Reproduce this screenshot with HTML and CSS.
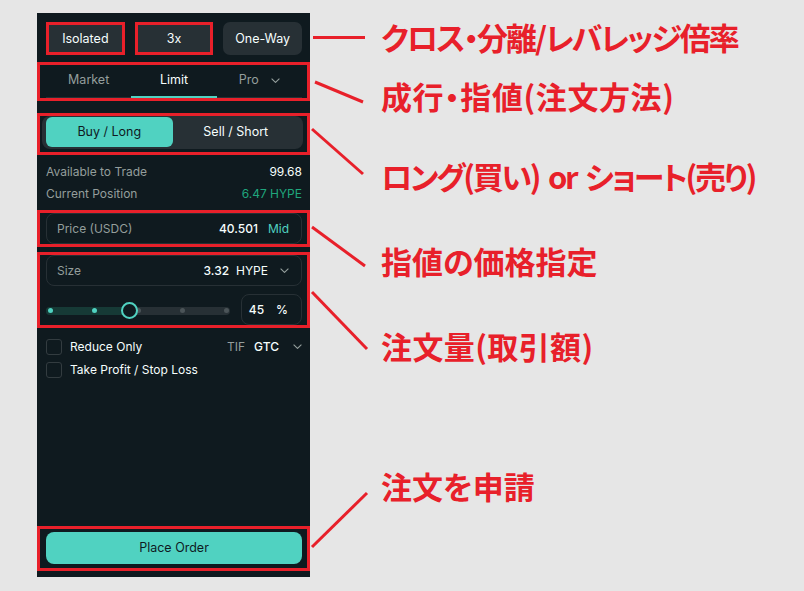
FILE: index.html
```html
<!DOCTYPE html>
<html lang="ja">
<head>
<meta charset="utf-8">
<title>Order panel</title>
<link rel="stylesheet" href="styles.css">
</head>
<body>
<div class="stage">
  <div class="panel">
    <div class="mode-row">
      <div class="chip mark">Isolated</div>
      <div class="chip mark">3x</div>
      <div class="chip">One-Way</div>
    </div>

    <div class="mark-box tabs">
      <div class="tab-list">
        <div class="tab">Market</div>
        <div class="tab active">Limit</div>
        <div class="tab">Pro
          <svg class="chev" width="9" height="5" viewBox="0 0 9 5"><path d="M0.6 0.6 L4.5 4.4 L8.4 0.6" fill="none" stroke="#949e9c" stroke-width="1.1"/></svg>
        </div>
      </div>
    </div>

    <div class="mark-box side">
      <div class="toggle">
        <div class="seg active">Buy / Long</div>
        <div class="seg">Sell / Short</div>
      </div>
    </div>

    <div class="info">
      <div class="info-row"><span class="muted">Available to Trade</span><span class="val">99.68</span></div>
      <div class="info-row"><span class="muted">Current Position</span><span class="green">6.47 HYPE</span></div>
    </div>

    <div class="mark-box price">
      <div class="field">
        <span class="muted">Price (USDC)</span>
        <span class="field-right"><span class="val">40.501</span><span class="teal">Mid</span></span>
      </div>
    </div>

    <div class="mark-box size">
      <div class="field">
        <span class="muted">Size</span>
        <span class="field-right size-right"><span class="val">3.32</span><span class="unit">HYPE</span>
          <svg class="chev" width="9" height="5" viewBox="0 0 9 5"><path d="M0.6 0.6 L4.5 4.4 L8.4 0.6" fill="none" stroke="#949e9c" stroke-width="1.1"/></svg>
        </span>
      </div>
      <div class="slider-row">
        <div class="slider">
          <div class="track">
            <div class="fill" style="width:83px"></div>
            <span class="dot on" style="left:4px"></span>
            <span class="dot on" style="left:48px"></span>
            <span class="dot" style="left:92px"></span>
            <span class="dot" style="left:136px"></span>
            <span class="dot" style="left:180px"></span>
            <span class="handle" style="left:83px"></span>
          </div>
        </div>
        <div class="pct"><span class="val">45</span><span>%</span></div>
      </div>
    </div>

    <div class="opts">
      <div class="opt-row">
        <span class="check"></span><span class="opt-label">Reduce Only</span>
        <span class="tif"><span class="muted">TIF</span><span class="val">GTC</span>
          <svg class="chev" width="9" height="5" viewBox="0 0 9 5"><path d="M0.6 0.6 L4.5 4.4 L8.4 0.6" fill="none" stroke="#949e9c" stroke-width="1.1"/></svg>
        </span>
      </div>
      <div class="opt-row">
        <span class="check"></span><span class="opt-label">Take Profit / Stop Loss</span>
      </div>
    </div>

    <div class="spacer"></div>

    <div class="mark-box order">
      <div class="place">Place Order</div>
    </div>
  </div>

  <svg class="callout-lines" width="804" height="591" viewBox="0 0 804 591">
    <g stroke="#e8202a" stroke-width="3" stroke-linecap="butt" fill="none">
      <line x1="313" y1="37.5" x2="365" y2="37.5"/>
      <line x1="315" y1="82" x2="363" y2="102"/>
      <line x1="312" y1="129" x2="363" y2="174"/>
      <line x1="312" y1="227" x2="365" y2="266"/>
      <line x1="312" y1="292" x2="367" y2="349"/>
      <line x1="312" y1="547" x2="367" y2="493"/>
    </g>
  </svg>

  <div class="callout c1">クロス・分離/レバレッジ倍率</div>
  <div class="callout c2">成行・指値(注文方法)</div>
  <div class="callout c3">ロング(買い) or ショート(売り)</div>
  <div class="callout c4">指値の価格指定</div>
  <div class="callout c5">注文量(取引額)</div>
  <div class="callout c6">注文を申請</div>
</div>
</body>
</html>
```

FILE: styles.css
```css
* { box-sizing: border-box; margin: 0; padding: 0; }
html, body { width: 804px; height: 591px; overflow: hidden; }
body { background: #e6e6e6; font-family: Inter, "Noto Sans", sans-serif; }

.stage { position: relative; width: 804px; height: 591px; padding: 13px 0 0 37px; }

.panel {
  width: 273px; height: 564px; background: #0f1a1f;
  display: flex; flex-direction: column;
  color: #f6fefd; font-size: 12px; line-height: 16px;
  padding-bottom: 6px;
}

.muted { color: #949e9c; }
.green { color: #1fa67d; }
.teal { color: #50d2c1; }
.val { color: #f6fefd; }

/* top chips */
.mode-row { display: flex; gap: 10px; padding: 9px 8px 0 9px; }
.chip {
  flex: 1; height: 33px; border-radius: 7px; background: #273035;
  display: flex; align-items: center; justify-content: center;
  font-size: 12.5px;
}
.chip.mark { border-radius: 0; box-shadow: inset 0 0 0 3px #e8202a; }

/* red annotation frames */
.mark-box { border: 3px solid #e8202a; padding: 0 5px 0 6px; }

/* tabs */
.tabs { margin-top: 7px; }
.tab-list { display: grid; grid-template-columns: repeat(3, 1fr); border-bottom: 1px solid #273035; }
.tab {
  padding: 7px 0 9px; color: #949e9c;
  display: flex; justify-content: center; align-items: center; gap: 12px;
  font-size: 12.5px;
}
.tab.active { color: #f6fefd; border-bottom: 2px solid #50d2c1; padding-bottom: 8px; margin-bottom: -1px; }
.chev { display: block; flex: none; }

/* buy / sell */
.side { margin-top: 12px; padding: 0 4px 3px 2px; }
.toggle { display: flex; height: 33px; padding: 1px 4px 2px; background: #273035; border-radius: 8px; }
.seg { flex: 1; display: flex; align-items: center; justify-content: center; border-radius: 6px; font-size: 12.5px; }
.seg.active { background: #50d2c1; color: #0f1a1f; }

/* info */
.info { margin-top: 6px; padding: 0 8px 0 9px; }
.info-row { height: 22px; display: flex; justify-content: space-between; align-items: center; }

/* fields */
.price { margin-top: 5px; }
.size { margin-top: 5px; }
.field {
  height: 31px; border: 1px solid #273035; border-radius: 8px;
  display: flex; align-items: center; justify-content: space-between;
  padding: 0 12px 0 10px;
}
.field-right { display: flex; align-items: center; gap: 10px; }
.field-right .val { font-weight: 500; }
.size-right { gap: 7px; }
.size-right .chev { margin-left: 5px; }

/* slider */
.slider-row { display: flex; align-items: center; gap: 11px; margin-top: 8px; height: 31px; }
.slider { flex: 1; padding-top: 2px; }
.track { position: relative; height: 8px; border-radius: 4px; background: #273035; }
.fill { position: absolute; left: 0; top: 0; bottom: 0; background: #163a36; border-radius: 4px 0 0 4px; }
.dot { position: absolute; top: 1.5px; width: 5px; height: 5px; margin-left: -2.5px; border-radius: 50%; background: #4b5458; }
.dot.on { background: #50d2c1; }
.handle {
  position: absolute; top: -4.5px; width: 17px; height: 17px; margin-left: -8.5px;
  border-radius: 50%; border: 2px solid #50d2c1; background: #0f1a1f;
}
.pct {
  width: 61px; height: 31px; border: 1px solid #273035; border-radius: 8px;
  display: flex; align-items: center; justify-content: flex-end; gap: 12px; padding-right: 13px;
  font-weight: 500;
}

/* options */
.opts { margin-top: 7px; padding: 0 8px 0 9px; }
.opt-row { height: 23px; display: flex; align-items: center; }
.check { width: 16px; height: 16px; border: 1px solid #333c40; border-radius: 3px; flex: none; }
.opt-label { margin-left: 8px; }
.tif { margin-left: auto; display: flex; align-items: center; gap: 9px; }
.tif .val { font-weight: 500; }
.tif .chev { margin-left: 5px; }

.spacer { flex: 1; }

/* place order */
.order { padding: 3px 5px 4px 6px; }
.place {
  height: 32px; border-radius: 8px; background: #50d2c1; color: #0f1a1f;
  display: flex; align-items: center; justify-content: center; font-size: 12.5px;
}

/* callouts */
.callout-lines { position: absolute; left: 0; top: 0; pointer-events: none; }
.callout {
  position: absolute; left: 381px;
  font-family: "Noto Sans CJK JP", "Noto Sans", sans-serif; font-weight: 700;
  font-size: 31px; line-height: 40px; color: #e8202a;
  font-feature-settings: "palt"; white-space: nowrap;
}
.c1 { top: 17px; letter-spacing: -2px; }
.c2 { top: 76px; letter-spacing: 0.6px; }
.c3 { top: 156px; letter-spacing: -2.3px; word-spacing: 4px; }
.c4 { top: 241px; }
.c5 { top: 326px; letter-spacing: 0.4px; }
.c6 { top: 466px; }
```
